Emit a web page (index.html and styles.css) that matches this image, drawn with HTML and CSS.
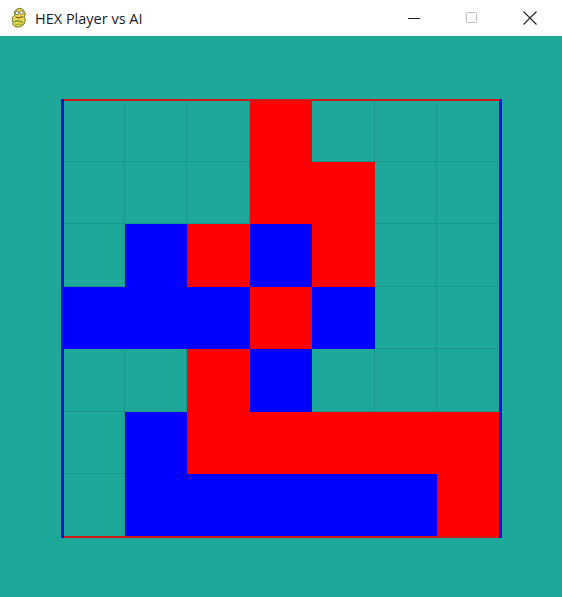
FILE: index.html
```html
<!DOCTYPE html>
<html>
<head>
<meta charset="utf-8">
<title>HEX Player vs AI</title>
<link rel="stylesheet" href="styles.css">
</head>
<body>
<div class="window">
  <div class="titlebar">
    <div class="title-left">
      <svg class="app-icon" width="20" height="22" viewBox="0 0 20 22">
        <path d="M4 15 Q2 10 6 8 Q4 4 8 2 Q13 0 15 4 Q18 7 15 10 Q18 13 15 17 Q12 21 7 20 Q3 19 4 15 Z" fill="#e9d64c" stroke="#6f7d2c" stroke-width="1"/>
        <circle cx="8" cy="6" r="1.7" fill="#fff" stroke="#333" stroke-width="0.6"/>
        <circle cx="12.5" cy="5.5" r="1.7" fill="#fff" stroke="#333" stroke-width="0.6"/>
        <path d="M6.5 10 Q10 12 14 9.5" stroke="#6a4a1a" stroke-width="1" fill="none"/>
        <path d="M5 15 Q9 12.5 14 15.5" stroke="#5f8f3a" stroke-width="1.4" fill="none"/>
        <path d="M6 18 Q10 16 13 18" stroke="#8aa43a" stroke-width="1" fill="none"/>
      </svg>
      <span class="title-text">HEX Player vs AI</span>
    </div>
    <div class="controls">
      <div class="ctl"><svg width="12" height="12" viewBox="0 0 12 12"><line x1="0" y1="6.5" x2="12" y2="6.5" stroke="#222" stroke-width="1"/></svg></div>
      <div class="ctl"><svg width="12" height="12" viewBox="0 0 12 12"><rect x="0.5" y="0.5" width="10" height="10" rx="1" fill="none" stroke="#bbb" stroke-width="1"/></svg></div>
      <div class="ctl"><svg width="14" height="14" viewBox="0 0 14 14"><path d="M0.5 0.5 L13.5 13.5 M13.5 0.5 L0.5 13.5" stroke="#222" stroke-width="1.1"/></svg></div>
    </div>
  </div>
  <div class="client">
    <div class="board">
      <div class="cell e"></div><div class="cell e"></div><div class="cell e"></div><div class="cell r"></div><div class="cell e"></div><div class="cell e"></div><div class="cell e"></div>
      <div class="cell e"></div><div class="cell e"></div><div class="cell e"></div><div class="cell r"></div><div class="cell r"></div><div class="cell e"></div><div class="cell e"></div>
      <div class="cell e"></div><div class="cell b"></div><div class="cell r"></div><div class="cell b"></div><div class="cell r"></div><div class="cell e"></div><div class="cell e"></div>
      <div class="cell b"></div><div class="cell b"></div><div class="cell b"></div><div class="cell r"></div><div class="cell b"></div><div class="cell e"></div><div class="cell e"></div>
      <div class="cell e"></div><div class="cell e"></div><div class="cell r"></div><div class="cell b"></div><div class="cell e"></div><div class="cell e"></div><div class="cell e"></div>
      <div class="cell e"></div><div class="cell b"></div><div class="cell r"></div><div class="cell r"></div><div class="cell r"></div><div class="cell r"></div><div class="cell r"></div>
      <div class="cell e"></div><div class="cell b"></div><div class="cell b"></div><div class="cell b"></div><div class="cell b"></div><div class="cell b"></div><div class="cell r"></div>
    </div>
  </div>
</div>
</body>
</html>
```

FILE: styles.css
```css
html, body {
  margin: 0;
  padding: 0;
  background: #1ea89a;
}
.window {
  width: 562px;
  height: 597px;
  display: flex;
  flex-direction: column;
  overflow: hidden;
}
.titlebar {
  height: 36px;
  flex: 0 0 36px;
  background: #ffffff;
  display: flex;
  align-items: center;
  justify-content: space-between;
}
.title-left {
  display: flex;
  align-items: center;
  padding-left: 9px;
  gap: 6px;
}
.app-icon {
  display: block;
}
.title-text {
  font-family: "Open Sans", "Noto Sans", "Liberation Sans", sans-serif;
  font-size: 14.5px;
  color: #1a1a1a;
}
.controls {
  display: flex;
  height: 36px;
  padding-right: 3px;
}
.ctl {
  width: 58px;
  height: 36px;
  display: flex;
  align-items: center;
  justify-content: center;
}
.client {
  flex: 1;
  background: #1ea89a;
  padding: 63px 0 0 62px;
}
.board {
  position: relative;
  width: 438px;
  height: 438px;
  display: grid;
  grid-template-columns: repeat(7, 1fr);
  grid-template-rows: repeat(7, 1fr);
}
.board::before {
  content: "";
  position: absolute;
  left: 0;
  right: 0;
  top: 0;
  bottom: -1px;
  border-top: 2px solid #d01818;
  border-bottom: 2px solid #d01818;
}
.board::after {
  content: "";
  position: absolute;
  left: -1px;
  right: -2px;
  top: 0;
  bottom: -1px;
  border-left: 3px solid #0a14e0;
  border-right: 3px solid #0a14e0;
}
.cell {
  box-sizing: border-box;
}
.cell.e {
  background: #1ea89a;
  border-right: 1px solid #17968a;
  border-bottom: 1px solid #17968a;
}
.cell.r {
  background: #ff0000;
}
.cell.b {
  background: #0000ff;
}
```
